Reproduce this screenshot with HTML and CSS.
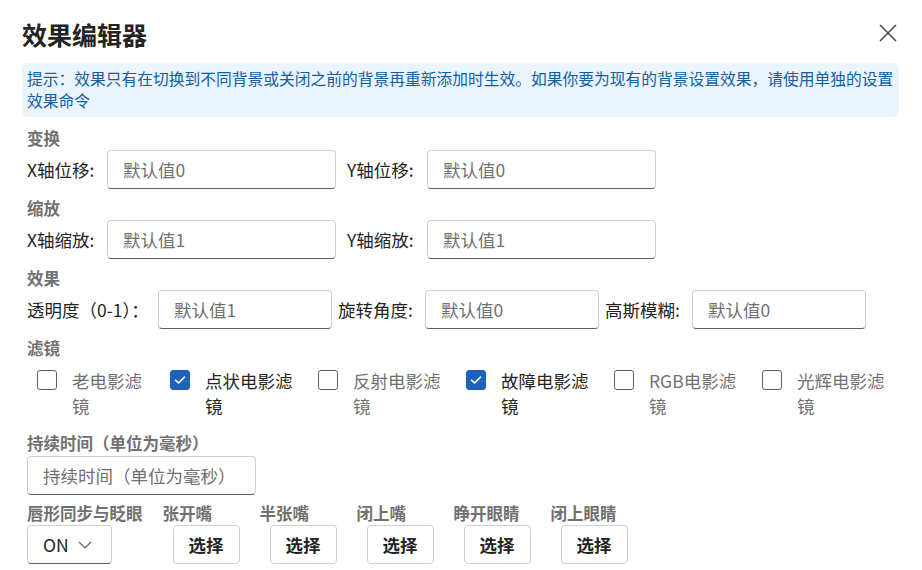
FILE: index.html
```html
<!DOCTYPE html>
<html lang="zh-CN">
<head>
<meta charset="utf-8">
<title>效果编辑器</title>
<link rel="stylesheet" href="styles.css">
</head>
<body>
<div class="dialog">
  <div class="header">
    <h1 class="title">效果编辑器</h1>
    <svg class="close" width="18" height="18" viewBox="0 0 18 18"><path d="M1 1 L17 17 M17 1 L1 17" stroke="#424242" stroke-width="1.5" fill="none"/></svg>
  </div>
  <div class="hint">提示：效果只有在切换到不同背景或关闭之前的背景再重新添加时生效。如果你要为现有的背景设置效果，请使用单独的设置效果命令</div>
  <div class="form">
    <div class="section first">
      <div class="sec-label">变换</div>
      <div class="row">
        <div class="field"><span class="lbl w80">X轴位移:</span><input class="inp w229" placeholder="默认值0"></div>
        <div class="field"><span class="lbl w80">Y轴位移:</span><input class="inp w229" placeholder="默认值0"></div>
      </div>
    </div>
    <div class="section">
      <div class="sec-label">缩放</div>
      <div class="row">
        <div class="field"><span class="lbl w80">X轴缩放:</span><input class="inp w229" placeholder="默认值1"></div>
        <div class="field"><span class="lbl w80">Y轴缩放:</span><input class="inp w229" placeholder="默认值1"></div>
      </div>
    </div>
    <div class="section">
      <div class="sec-label">效果</div>
      <div class="row tight">
        <div class="field"><span class="lbl w131">透明度（0-1）：</span><input class="inp w174" placeholder="默认值1"></div>
        <div class="field"><span class="lbl w87">旋转角度:</span><input class="inp w174" placeholder="默认值0"></div>
        <div class="field"><span class="lbl w87">高斯模糊:</span><input class="inp w174" placeholder="默认值0"></div>
      </div>
    </div>
    <div class="section">
      <div class="sec-label">滤镜</div>
      <div class="checks">
        <div class="check"><span class="box"></span><span class="clabel">老电影滤镜</span></div>
        <div class="check on"><span class="box"><svg width="12" height="10" viewBox="0 0 12 10"><path d="M1.5 5.2 L4.6 8 L10.5 2" stroke="#fff" stroke-width="1.6" fill="none" stroke-linecap="round" stroke-linejoin="round"/></svg></span><span class="clabel">点状电影滤镜</span></div>
        <div class="check"><span class="box"></span><span class="clabel">反射电影滤镜</span></div>
        <div class="check on"><span class="box"><svg width="12" height="10" viewBox="0 0 12 10"><path d="M1.5 5.2 L4.6 8 L10.5 2" stroke="#fff" stroke-width="1.6" fill="none" stroke-linecap="round" stroke-linejoin="round"/></svg></span><span class="clabel">故障电影滤镜</span></div>
        <div class="check"><span class="box"></span><span class="clabel">RGB电影滤镜</span></div>
        <div class="check"><span class="box"></span><span class="clabel">光辉电影滤镜</span></div>
      </div>
    </div>
    <div class="section dur">
      <div class="sec-label short">持续时间（单位为毫秒）</div>
      <input class="inp w229" placeholder="持续时间（单位为毫秒）">
    </div>
    <div class="bottom">
      <div class="group first-group">
        <div class="sec-label">唇形同步与眨眼</div>
        <div class="select"><span>ON</span><svg width="14" height="8" viewBox="0 0 14 8"><path d="M1 1 L7 7 L13 1" stroke="#616161" stroke-width="1.2" fill="none"/></svg></div>
      </div>
      <div class="group">
        <div class="sec-label">张开嘴</div>
        <div class="btn">选择</div>
      </div>
      <div class="group">
        <div class="sec-label">半张嘴</div>
        <div class="btn">选择</div>
      </div>
      <div class="group">
        <div class="sec-label">闭上嘴</div>
        <div class="btn">选择</div>
      </div>
      <div class="group">
        <div class="sec-label">睁开眼睛</div>
        <div class="btn">选择</div>
      </div>
      <div class="group">
        <div class="sec-label">闭上眼睛</div>
        <div class="btn">选择</div>
      </div>
    </div>
  </div>
</div>
</body>
</html>
```
FILE: styles.css
```css
* { box-sizing: border-box; }
html, body { margin: 0; padding: 0; background: #fff; }
body {
  font-family: "Noto Sans CJK SC", "Noto Sans", sans-serif;
  color: #242424;
  width: 922px;
  height: 570px;
  overflow: hidden;
}
.dialog { padding: 15px 23px 0 22px; }
.header {
  display: flex;
  justify-content: space-between;
  align-items: center;
  height: 38px;
}
.title {
  margin: 0;
  font-size: 25px;
  font-weight: 700;
  line-height: 38px;
  color: #242424;
}
.close { margin-right: 2px; margin-top: -2px; }
.hint {
  margin-top: 10px;
  background: #ebf3fc;
  border-radius: 6px;
  padding: 5px 5px;
  font-size: 15.75px;
  line-height: 22px;
  color: #115ea3;
}
.form { padding-left: 5px; }
.section { margin-top: 7px; }
.section.first { margin-top: 9px; }
.sec-label {
  font-size: 16.5px;
  font-weight: 700;
  line-height: 24px;
  color: #707070;
  white-space: nowrap;
}
.row { display: flex; gap: 11px; }
.row.tight { gap: 6px; }
.field { display: flex; align-items: center; }
.lbl {
  font-size: 17.5px;
  line-height: 39px;
  color: #242424;
  white-space: nowrap;
}
.w80 { width: 80px; }
.w131 { width: 131px; }
.w87 { width: 87px; }
.inp {
  height: 39px;
  border: 1px solid #d1d1d1;
  border-bottom-color: #616161;
  border-radius: 4px;
  padding: 0 0 0 15px;
  font-family: "Noto Sans CJK SC", "Noto Sans", sans-serif;
  font-size: 17.5px;
  color: #242424;
  background: #fff;
  outline: none;
}
.inp::placeholder { color: #707070; }
.w229 { width: 229px; }
.w174 { width: 174px; }
.checks {
  display: grid;
  grid-template-columns: 133px 148px 148px 148px 148px 146px;
  padding-top: 10px;
}
.check {
  display: flex;
  align-items: flex-start;
  padding-left: 10px;
  padding-right: 5px;
  min-width: 0;
}
.box {
  width: 20px;
  height: 20px;
  border: 1px solid #616161;
  border-radius: 3px;
  flex: none;
  display: flex;
  align-items: center;
  justify-content: center;
}
.check.on .box { background: #1f62bd; border-color: #1f62bd; }
.clabel {
  margin-left: 15px;
  flex: 1;
  min-width: 0;
  font-size: 17.5px;
  line-height: 25px;
  margin-top: -2px;
  color: #707070;
}
.check.on .clabel { color: #242424; }
.section.dur { margin-top: 13px; }
.sec-label.short { line-height: 25px; }
.bottom { display: flex; gap: 20px; margin-top: 6px; }
.group { width: 77px; }
.group.first-group { width: auto; }
.select {
  width: 85px;
  height: 39px;
  border: 1px solid #d1d1d1;
  border-bottom-color: #616161;
  border-radius: 4px;
  display: flex;
  align-items: center;
  padding-left: 15px;
  gap: 9px;
  font-size: 17.5px;
  color: #242424;
}
.btn {
  margin-left: 10px;
  width: 67px;
  height: 39px;
  border: 1px solid #d1d1d1;
  border-radius: 4px;
  display: flex;
  align-items: center;
  justify-content: center;
  font-size: 17.5px;
  font-weight: 700;
  color: #242424;
}
```
